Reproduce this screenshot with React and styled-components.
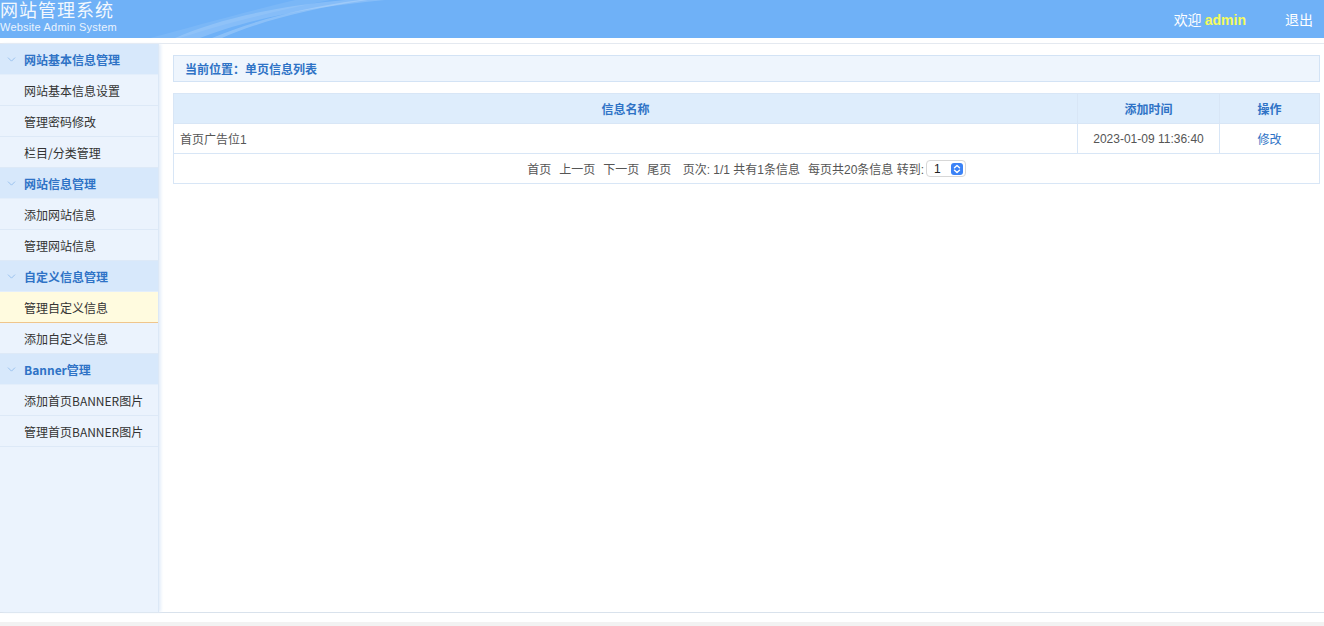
import React from 'react';
import styled, { createGlobalStyle } from 'styled-components';
import { ChevronDown } from 'lucide-react';

const GlobalStyle = createGlobalStyle`
  html, body { margin: 0; padding: 0; height: 100%; }
  body {
    font-family: "Liberation Sans", "Noto Sans CJK SC", sans-serif;
    font-size: 12px;
    color: #333;
    background: #fff;
  }
  #root { height: 100%; }
`;

const menu = [
  { title: '网站基本信息管理', items: ['网站基本信息设置', '管理密码修改', '栏目/分类管理'] },
  { title: '网站信息管理', items: ['添加网站信息', '管理网站信息'] },
  { title: '自定义信息管理', items: ['管理自定义信息', '添加自定义信息'], active: 0 },
  { title: 'Banner管理', items: ['添加首页BANNER图片', '管理首页BANNER图片'] },
];

const Page = styled.div`
  height: 626px;
  display: flex;
  flex-direction: column;
  overflow: hidden;
`;

const Header = styled.header`
  position: relative;
  height: 38px;
  flex-shrink: 0;
  background: #6fb1f7;
  display: flex;
  align-items: center;
  justify-content: space-between;
  overflow: hidden;
`;

const Swoosh = styled.svg`
  position: absolute;
  left: 0;
  top: 0;
  pointer-events: none;
`;

const Logo = styled.div`
  position: relative;
  align-self: flex-start;
  padding-top: 1px;
  color: #fff;
`;

const LogoTitle = styled.div`
  font-family: "Liberation Sans", "Noto Sans CJK SC", sans-serif;
  font-size: 18px;
  line-height: 20px;
  letter-spacing: 1px;
  opacity: 0.92;
`;

const LogoSub = styled.div`
  font-size: 11px;
  line-height: 12px;
  letter-spacing: 0.2px;
  opacity: 0.85;
`;

const UserBar = styled.div`
  position: relative;
  display: flex;
  gap: 39px;
  padding-right: 11px;
  color: #fff;
  font-size: 14px;
  font-family: "Noto Sans CJK SC", sans-serif;
`;

const Admin = styled.b`
  color: #f6fb5c;
  font-family: "Liberation Sans", sans-serif;
  font-weight: bold;
`;

const Divider = styled.div`
  height: 5px;
  flex-shrink: 0;
  border-bottom: 1px solid #e4e9f0;
`;

const Main = styled.div`
  flex: 1;
  display: flex;
  min-height: 0;
`;

const Sidebar = styled.nav`
  width: 158px;
  flex-shrink: 0;
  background: #ebf3fd;
  box-shadow: 1px 0 0 #dce8f6, 3px 0 3px #e4eefa;
  position: relative;
  z-index: 1;
`;

const GroupHead = styled.div`
  height: 31px;
  display: flex;
  align-items: center;
  gap: 6px;
  padding-left: 5px;
  background: #d7e8fb;
  color: #2f73c6;
  font-weight: bold;
  font-family: "Noto Sans CJK SC", sans-serif;
  font-size: 12px;
  border-bottom: 1px solid #e3eefb;
  box-sizing: border-box;
  & svg { color: #8db9ea; }
`;

const Item = styled.div`
  height: 30px;
  display: flex;
  align-items: center;
  padding-left: 24px;
  color: #333;
  font-family: "Noto Sans CJK SC", sans-serif;
  font-size: 12px;
  border-bottom: 1px solid ${p => (p.$active ? '#efc58c' : '#dde9f7')};
  background: ${p => (p.$active ? '#fffbdf' : 'transparent')};
`;

const Content = styled.section`
  flex: 1;
  padding: 11px 4px 0 15px;
  display: flex;
  flex-direction: column;
  gap: 11px;
`;

const Crumb = styled.div`
  height: 27px;
  box-sizing: border-box;
  border: 1px solid #d3e3f5;
  background: #eef5fd;
  display: flex;
  align-items: center;
  padding-left: 11px;
  color: #2f73c6;
  font-weight: bold;
  font-family: "Noto Sans CJK SC", sans-serif;
`;

const Table = styled.table`
  width: 100%;
  border-collapse: collapse;
  font-size: 12px;
`;

const Th = styled.th`
  height: 29px;
  padding: 0;
  background: #deedfc;
  color: #2f73c6;
  font-weight: bold;
  font-family: "Noto Sans CJK SC", sans-serif;
  border: 1px solid #d8e6f6;
  width: ${p => p.$w || 'auto'};
`;

const Td = styled.td`
  height: 29px;
  padding: 0 ${p => (p.$left ? '6px' : '0')};
  text-align: ${p => (p.$left ? 'left' : 'center')};
  color: ${p => (p.$link ? '#2f73c6' : '#555')};
  border: 1px solid #d8e6f6;
  font-family: "Liberation Sans", "Noto Sans CJK SC", sans-serif;
`;

const PagerCell = styled.td`
  height: 29px;
  padding: 0;
  text-align: center;
  color: #555;
  border: 1px solid #d8e6f6;
  font-family: "Liberation Sans", "Noto Sans CJK SC", sans-serif;
`;

const Pager = styled.span`
  display: inline-flex;
  align-items: center;
  gap: 8px;
`;

const Select = styled.span`
  display: inline-flex;
  align-items: center;
  gap: 10px;
  height: 15px;
  padding: 0 2px 0 7px;
  margin-left: -6px;
  border: 1px solid #d7d7d7;
  border-radius: 4px;
  background: #fff;
  color: #222;
  font-size: 12px;
`;

const Stepper = styled.span`
  width: 12px;
  height: 12px;
  border-radius: 3px;
  background: #3b82f6;
  display: inline-flex;
  align-items: center;
  justify-content: center;
`;

const Footer = styled.footer`
  height: 13px;
  flex-shrink: 0;
  border-top: 1px solid #d9e2ec;
  background: linear-gradient(#fff 0, #fff 9px, #f2f2f2 9px);
`;

export default function App() {
  return (
    <Page>
      <GlobalStyle />
      <Header>
        <Swoosh width="420" height="38" viewBox="0 0 420 38">
          <path d="M175 38 C215 20 275 6 345 0 L385 0 C300 8 240 22 200 38 Z" fill="#ffffff" opacity="0.16" />
          <path d="M212 38 C250 22 300 8 360 0 L368 0 C306 9 258 22 222 38 Z" fill="#ffffff" opacity="0.2" />
          <path d="M150 38 C195 26 245 12 295 0 L330 0 C270 12 215 26 180 38 Z" fill="#ffffff" opacity="0.08" />
        </Swoosh>
        <Logo>
          <LogoTitle>网站管理系统</LogoTitle>
          <LogoSub>Website Admin System</LogoSub>
        </Logo>
        <UserBar>
          <span>欢迎 <Admin>admin</Admin></span>
          <span>退出</span>
        </UserBar>
      </Header>
      <Divider />
      <Main>
        <Sidebar>
          {menu.map(g => (
            <div key={g.title}>
              <GroupHead>
                <ChevronDown size={13} strokeWidth={1.5} />
                {g.title}
              </GroupHead>
              {g.items.map((it, i) => (
                <Item key={it} $active={g.active === i}>{it}</Item>
              ))}
            </div>
          ))}
        </Sidebar>
        <Content>
          <Crumb>当前位置：单页信息列表</Crumb>
          <Table>
            <thead>
              <tr>
                <Th>信息名称</Th>
                <Th $w="141px">添加时间</Th>
                <Th $w="99px">操作</Th>
              </tr>
            </thead>
            <tbody>
              <tr>
                <Td $left>首页广告位1</Td>
                <Td>2023-01-09 11:36:40</Td>
                <Td $link>修改</Td>
              </tr>
              <tr>
                <PagerCell colSpan={3}>
                  <Pager>
                    <span>首页</span>
                    <span>上一页</span>
                    <span>下一页</span>
                    <span>尾页</span>
                    <span>&nbsp;页次: 1/1 共有1条信息</span>
                    <span>每页共20条信息 转到:</span>
                    <Select>
                      1
                      <Stepper>
                        <svg width="8" height="10" viewBox="0 0 8 10" fill="none" stroke="#fff" strokeWidth="1.4" strokeLinecap="round" strokeLinejoin="round">
                          <path d="M1.5 3.8 L4 1.5 L6.5 3.8" />
                          <path d="M1.5 6.2 L4 8.5 L6.5 6.2" />
                        </svg>
                      </Stepper>
                    </Select>
                  </Pager>
                </PagerCell>
              </tr>
            </tbody>
          </Table>
        </Content>
      </Main>
      <Footer />
    </Page>
  );
}
